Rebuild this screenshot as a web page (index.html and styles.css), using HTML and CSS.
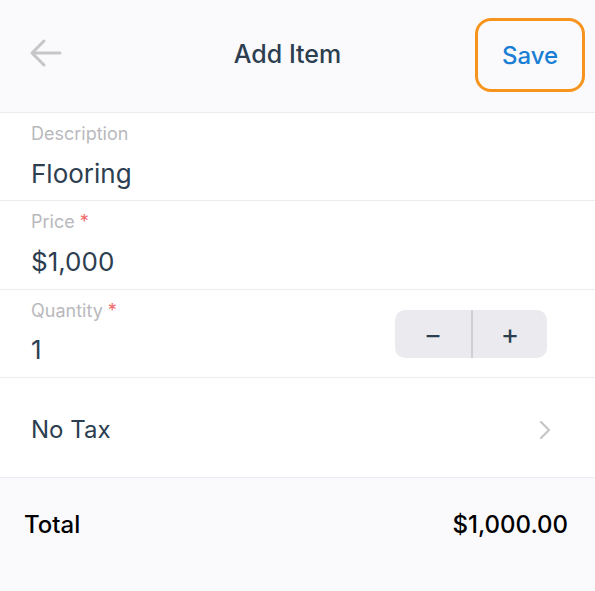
FILE: index.html
```html
<!DOCTYPE html>
<html lang="en">
<head>
    <meta charset="UTF-8">
    <meta name="viewport" content="width=device-width, initial-scale=1.0">
    <title>Add Item</title>
    <link rel="stylesheet" href="styles.css">
</head>
<body>
    <header class="topbar">
        <button class="back" aria-label="Back">
            <svg width="34" height="30" viewBox="0 0 34 30" fill="none" stroke="#c6c6c8" stroke-width="3" stroke-linecap="round" stroke-linejoin="round">
                <path d="M31 15H4M15 3L3 15l12 12"/>
            </svg>
        </button>
        <h1 class="title">Add Item</h1>
        <button class="save">Save</button>
    </header>

    <div class="field">
        <label class="label">Description</label>
        <div class="value">Flooring</div>
    </div>
    <div class="field field-price">
        <label class="label">Price <span class="req">*</span></label>
        <div class="value">$1,000</div>
    </div>
    <div class="field field-qty">
        <div>
            <label class="label">Quantity <span class="req">*</span></label>
            <div class="value">1</div>
        </div>
        <div class="stepper">
            <button class="step">&minus;</button>
            <button class="step">+</button>
        </div>
    </div>
    <div class="row-tax">
        <span>No Tax</span>
        <svg width="12" height="20" viewBox="0 0 12 20" fill="none" stroke="#c6c6c8" stroke-width="2.2" stroke-linecap="round" stroke-linejoin="round">
            <path d="M2 2l8 8-8 8"/>
        </svg>
    </div>
    <div class="total">
        <span>Total</span>
        <span>$1,000.00</span>
    </div>
</body>
</html>
```

FILE: styles.css
```css
body { margin: 0; font-family: Inter, "Noto Sans", sans-serif; background: #fff; color: #2c3e50; height: 591px; display: flex; flex-direction: column; }
button { font-family: inherit; border: none; background: none; padding: 0; cursor: pointer; }

.topbar { height: 113px; flex-shrink: 0; background: #fafafc; border-bottom: 1px solid #ececf0; display: flex; align-items: center; justify-content: space-between; padding: 0 10px 0 29px; box-sizing: border-box; position: relative; }
.back { display: flex; margin-top: -6px; }
.title { position: absolute; left: 0; right: 20px; text-align: center; margin: -5px 0 0; font-size: 25px; font-weight: 500; color: #2c3e50; pointer-events: none; }
.save { width: 110px; height: 74px; border: 3px solid #f7941d; border-radius: 16px; box-sizing: border-box; color: #1a7fd4; font-size: 24px; font-weight: 500; margin-top: -2px; }

.field { border-bottom: 1px solid #ececf0; padding: 9px 31px 0; height: 88px; flex-shrink: 0; box-sizing: border-box; }
.field-price { height: 89px; }
.label { display: block; font-size: 18px; color: #b9b9bd; line-height: 24px; }
.req { color: #ef6b6b; }
.value { font-size: 26px; line-height: 34px; margin-top: 11px; color: #2c3e50; }

.field-qty { display: flex; justify-content: space-between; align-items: flex-start; }
.field-qty .value { margin-top: 10px; }
.stepper { display: flex; background: #ebebef; border-radius: 10px; margin-top: 11px; margin-right: 17px; height: 48px; }
.step { width: 76px; font-size: 28px; color: #2c3e50; line-height: 48px; }
.step + .step { border-left: 2px solid #d0d0d4; }

.row-tax { height: 100px; flex-shrink: 0; border-bottom: 1px solid #ececf0; display: flex; align-items: center; justify-content: space-between; padding: 4px 44px 0 31px; box-sizing: border-box; font-size: 24px; color: #2c3e50; }

.total { flex: 1; background: #fafafc; display: flex; justify-content: space-between; padding: 32px 27px 0 24px; font-size: 24px; font-weight: 500; color: #000; }
```
